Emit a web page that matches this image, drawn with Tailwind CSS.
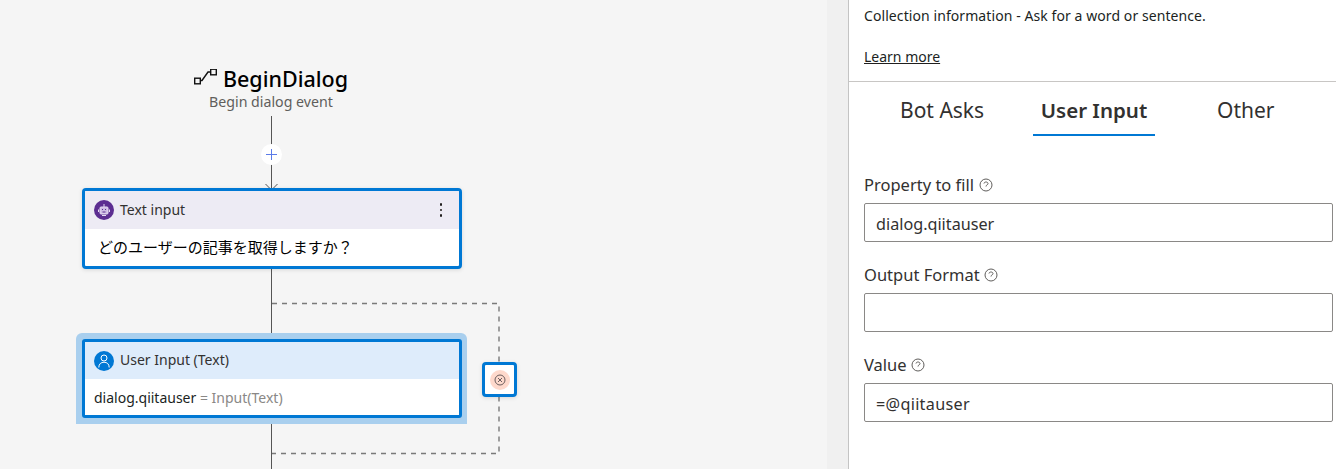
<!DOCTYPE html>
<html><head><meta charset="utf-8"><script src="https://cdn.jsdelivr.net/npm/@tailwindcss/browser@4"></script></head>
<body class="m-0 overflow-hidden bg-white">
<div class="flex w-[1336px] h-[469px] overflow-hidden font-['Noto_Sans','Noto_Sans_CJK_JP',sans-serif]">
  <main class="relative w-[848px] h-full bg-[#f5f5f5] shrink-0">
    <div class="absolute right-0 top-0 w-[21px] h-full bg-[#f0f0f0]"></div>
    <svg class="absolute left-0 top-0" width="848" height="469" fill="none">
      <path d="M271.5 116V190M271.5 268V339M271.5 418V469" stroke="#555"/>
      <path d="M265.5 184L271.5 190L277.5 184" stroke="#555"/>
      <path d="M272 303.5H499V453.5H272" stroke="#7a7a7a" stroke-width="1.4" stroke-dasharray="5 5"/>
    </svg>
    <div class="absolute left-[170px] top-[64px] w-[202px] flex flex-col items-center">
      <div class="flex items-center gap-[5px] h-[30px]">
        <svg width="24" height="20" viewBox="0 0 24 20" fill="none" stroke="#111" stroke-width="1.4"><rect x="0.7" y="9.2" width="5.6" height="5.6"/><rect x="16.7" y="0.2" width="5.6" height="5.6"/><path d="M6.5 11.5H8L14 3H16.5"/></svg>
        <span class="text-[21.5px] leading-[30px] font-medium text-black">BeginDialog</span>
      </div>
      <div class="text-[14.2px] leading-[18px] text-[#605e5c] -mt-[1px]">Begin dialog event</div>
    </div>
    <div class="absolute left-[261px] top-[144px] w-[21px] h-[21px] rounded-full bg-white flex items-center justify-center">
      <svg width="11" height="11" fill="none" stroke="#5b7be8"><path d="M5.5 0V11M0 5.5H11"/></svg>
    </div>
    <div class="absolute left-[82px] top-[188px] w-[380px] h-[81px] border-[3px] border-[#0078d4] rounded-[4px] bg-white shadow-[0_1px_4px_rgba(0,0,0,0.12)] overflow-hidden">
      <div class="h-[38px] bg-[#edebf4] flex items-center pl-[9px] pr-[17px] gap-[6px]">
        <span class="w-5 h-5 rounded-full bg-[#5c2d91] flex items-center justify-center shrink-0">
          <svg width="14" height="14" viewBox="0 0 14 14" fill="none" stroke="#e6dcf2"><rect x="3" y="4" width="8" height="7" rx="1" fill="#cdbbe3"/><path d="M7 1v3M1.5 6.5v2.5M12.5 6.5v2.5M5 12.5h4"/><path d="M5 6.5h1M8 6.5h1M5.5 9h3" stroke="#5c2d91"/></svg>
        </span>
        <span class="text-[14px] text-[#323130] flex-1 -mt-[2px]">Text input</span>
        <span class="flex flex-col gap-[3px]"><i class="block w-[2.5px] h-[2.5px] rounded-full bg-[#201f1e]"></i><i class="block w-[2.5px] h-[2.5px] rounded-full bg-[#201f1e]"></i><i class="block w-[2.5px] h-[2.5px] rounded-full bg-[#201f1e]"></i></span>
      </div>
      <div class="pl-[13px] pt-[8px] text-[15px] leading-[20px] text-black">どのユーザーの記事を取得しますか？</div>
    </div>
    <div class="absolute left-[76px] top-[333px] w-[391px] h-[91px] rounded-t-[6px] bg-[#a9cfee]"></div>
    <div class="absolute left-[82px] top-[339px] w-[380px] h-[79px] border-[3px] border-[#0078d4] rounded-[3px] bg-white overflow-hidden">
      <div class="h-[37px] bg-[#deecfb] flex items-center pl-[9px] gap-[6px]">
        <span class="w-5 h-5 rounded-full bg-[#0078d4] flex items-center justify-center shrink-0">
          <svg width="12" height="14" viewBox="0 0 12 14" fill="none" stroke="#fff"><circle cx="6" cy="4" r="3"/><path d="M0.8 13.5C0.8 10 3 8.2 6 8.2S11.2 10 11.2 13.5"/></svg>
        </span>
        <span class="text-[14px] text-[#323130] -mt-[2px]">User Input (Text)</span>
      </div>
      <div class="pl-[9px] pt-[9px] text-[14px] leading-[20px] text-[#201f1e]">dialog.qiitauser <span class="text-[#8a8886]">= Input(Text)</span></div>
    </div>
    <div class="absolute left-[482px] top-[362px] w-[35px] h-[35px] border-[3px] border-[#0078d4] rounded-[4px] bg-white flex items-center justify-center shadow-[0_1px_4px_rgba(0,0,0,0.12)]">
      <span class="w-5 h-5 rounded-full bg-[#fed9cc] flex items-center justify-center">
        <svg width="12" height="12" fill="none" stroke="#6b5d5d"><circle cx="6" cy="6" r="5"/><path d="M4 4L8 8M8 4L4 8"/></svg>
      </span>
    </div>
  </main>
  <aside class="flex-1 border-l border-[#c4c4c4] bg-white flex flex-col text-[#323130]">
    <div class="h-[82px] border-b border-[#c8c6c4] pl-[15px] pt-[6px] text-[14px] leading-[20px] text-[#201f1e]">
      <p class="m-0 tracking-[0.08px]">Collection information - Ask for a word or sentence.</p>
      <a class="block mt-[21px] underline">Learn more</a>
    </div>
    <div class="relative h-[54px] text-[21px]">
      <span class="absolute left-[51px] top-[12px] leading-[32px]">Bot Asks</span>
      <span class="absolute left-[184px] w-[122px] top-[12px] h-[42px] leading-[32px] text-center font-semibold text-[20.5px] border-b-2 border-[#0078d4]">User Input</span>
      <span class="absolute left-[368px] top-[12px] leading-[32px]">Other</span>
    </div>
    <div class="pl-[15px] pr-[3px] pt-[37px] flex flex-col">
      <label class="flex items-center gap-[5px] h-[24px] text-[16.5px]">Property to fill
        <svg width="14" height="14" fill="none" stroke="#605e5c"><circle cx="7" cy="7" r="6"/><path d="M5 5.5C5 3.5 9 3.5 9 5.5C9 7 7 6.8 7 8.5M7 10h.01"/></svg></label>
      <div class="mt-[6px] h-[39px] border border-[#8a8886] rounded-[2px] pl-[11px] text-[16.2px] leading-[40px]">dialog.qiitauser</div>
      <label class="mt-[21px] flex items-center gap-[4px] h-[24px] text-[16.5px]">Output Format
        <svg width="14" height="14" fill="none" stroke="#605e5c"><circle cx="7" cy="7" r="6"/><path d="M5 5.5C5 3.5 9 3.5 9 5.5C9 7 7 6.8 7 8.5M7 10h.01"/></svg></label>
      <div class="mt-[6px] h-[39px] border border-[#8a8886] rounded-[2px]"></div>
      <label class="mt-[21px] flex items-center gap-[4px] h-[24px] text-[16.5px]">Value
        <svg width="14" height="14" fill="none" stroke="#605e5c"><circle cx="7" cy="7" r="6"/><path d="M5 5.5C5 3.5 9 3.5 9 5.5C9 7 7 6.8 7 8.5M7 10h.01"/></svg></label>
      <div class="mt-[6px] h-[39px] border border-[#8a8886] rounded-[2px] pl-[11px] text-[16.2px] leading-[40px] tracking-[0.3px]">=@qiitauser</div>
    </div>
  </aside>
</div>
</body></html>
